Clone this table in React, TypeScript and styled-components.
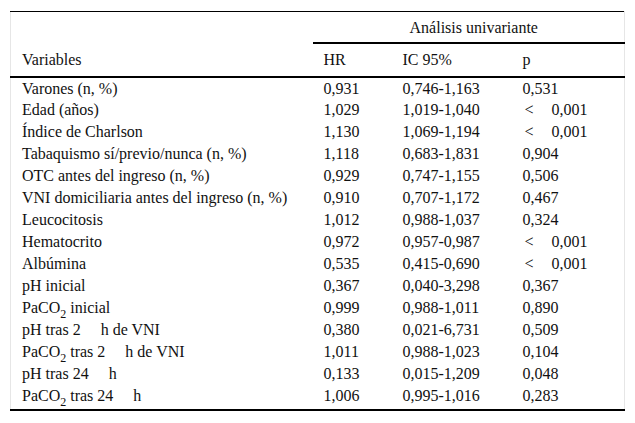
import styled, { createGlobalStyle } from 'styled-components';

const GlobalStyle = createGlobalStyle`
  body {
    margin: 0;
    background: #fff;
  }
`;

type Row = { label: React.ReactNode; hr: string; ic: string; p: string; lt?: boolean };

const Sub = styled.sub`
  font-size: 12px;
  vertical-align: -5px;
  line-height: 0;
`;

const Gap = styled.span<{ $w?: number }>`
  display: inline-block;
  width: ${(p) => p.$w ?? 20}px;
`;

const PaCO2 = () => (
  <>
    PaCO<Sub>2</Sub>
  </>
);

const rows: Row[] = [
  { label: 'Varones (n, %)', hr: '0,931', ic: '0,746-1,163', p: '0,531' },
  { label: 'Edad (años)', hr: '1,029', ic: '1,019-1,040', p: '0,001', lt: true },
  { label: 'Índice de Charlson', hr: '1,130', ic: '1,069-1,194', p: '0,001', lt: true },
  { label: 'Tabaquismo sí/previo/nunca (n, %)', hr: '1,118', ic: '0,683-1,831', p: '0,904' },
  { label: 'OTC antes del ingreso (n, %)', hr: '0,929', ic: '0,747-1,155', p: '0,506' },
  { label: 'VNI domiciliaria antes del ingreso (n, %)', hr: '0,910', ic: '0,707-1,172', p: '0,467' },
  { label: 'Leucocitosis', hr: '1,012', ic: '0,988-1,037', p: '0,324' },
  { label: 'Hematocrito', hr: '0,972', ic: '0,957-0,987', p: '0,001', lt: true },
  { label: 'Albúmina', hr: '0,535', ic: '0,415-0,690', p: '0,001', lt: true },
  { label: 'pH inicial', hr: '0,367', ic: '0,040-3,298', p: '0,367' },
  { label: <><PaCO2 /> inicial</>, hr: '0,999', ic: '0,988-1,011', p: '0,890' },
  { label: <>pH tras 2<Gap />h de VNI</>, hr: '0,380', ic: '0,021-6,731', p: '0,509' },
  { label: <><PaCO2 /> tras 2<Gap />h de VNI</>, hr: '1,011', ic: '0,988-1,023', p: '0,104' },
  { label: <>pH tras 24<Gap />h</>, hr: '0,133', ic: '0,015-1,209', p: '0,048' },
  { label: <><PaCO2 /> tras 24<Gap />h</>, hr: '1,006', ic: '0,995-1,016', p: '0,283' },
];

function App() {
  return (
    <Page>
      <GlobalStyle />
      <Table>
        <colgroup>
          <col style={{ width: 302 }} />
          <col style={{ width: 79 }} />
          <col style={{ width: 120 }} />
          <col />
        </colgroup>
        <thead>
          <tr>
            <VarHead rowSpan={2}>Variables</VarHead>
            <GroupCell colSpan={3}>Análisis univariante</GroupCell>
          </tr>
          <tr>
            <HeadCell>HR</HeadCell>
            <HeadCell>IC 95%</HeadCell>
            <HeadCell>p</HeadCell>
          </tr>
        </thead>
        <tbody>
          {rows.map((r, i) => (
            <BodyRow key={i} $last={i === rows.length - 1}>
              <Cell>{r.label}</Cell>
              <Cell>{r.hr}</Cell>
              <Cell>{r.ic}</Cell>
              <Cell>
                {r.lt ? (
                  <>
                    <Lt>&lt;</Lt>
                    <Gap $w={18} />
                    {r.p}
                  </>
                ) : r.p}
              </Cell>
            </BodyRow>
          ))}
        </tbody>
      </Table>
    </Page>
  );
}

const Page = styled.div`
  padding: 11px 10px;
  font-family: 'Liberation Serif', 'Times New Roman', serif;
  font-size: 16px;
  color: #111;
`;

const Table = styled.table`
  width: 615px;
  border-collapse: collapse;
  border-top: 1px solid #000;
  border-bottom: 2px solid #000;
  border-left: 1px solid #e6e6e6;
  border-right: 1px solid #e6e6e6;
  table-layout: fixed;
`;

const HeadCell = styled.th`
  font-weight: normal;
  text-align: left;
  padding: 0 0 0 11px;
  height: 32px;
  line-height: 18px;
  vertical-align: middle;
  border-bottom: 2px solid #000;
`;

const VarHead = styled(HeadCell)`
  vertical-align: bottom;
  padding-bottom: 7px;
`;

const GroupCell = styled.th`
  font-weight: normal;
  text-align: center;
  height: 28px;
  line-height: 18px;
  padding: 2px 0 0 11px;
  border-bottom: 2px solid #000;
`;

const BodyRow = styled.tr<{ $last?: boolean }>`
  height: ${(p) => (p.$last ? 25 : 22)}px;
  & > td {
    padding-bottom: ${(p) => (p.$last ? 3 : 0)}px;
  }
`;

const Cell = styled.td`
  padding: 0 0 0 11px;
  line-height: 18px;
  vertical-align: middle;
  white-space: nowrap;
`;

const Lt = styled.span`
  padding-left: 2px;
`;

export default App;
